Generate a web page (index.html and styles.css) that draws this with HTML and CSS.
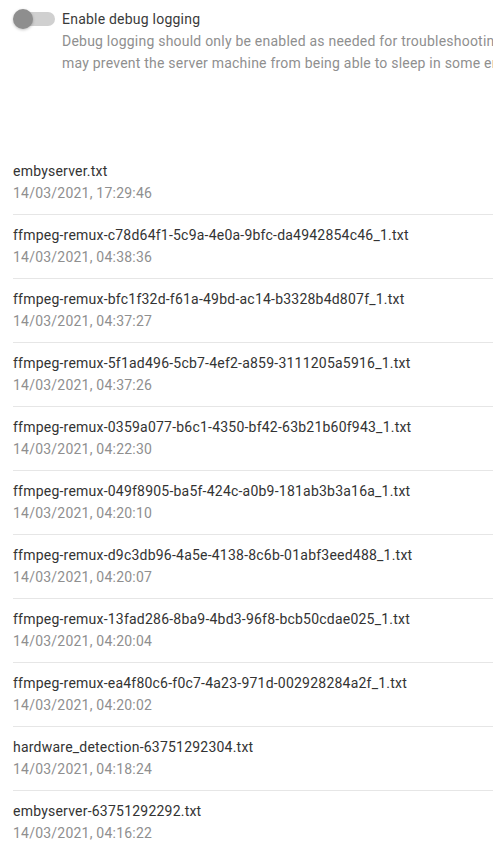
FILE: index.html
```html
<!DOCTYPE html>
<html lang="en">
<head>
    <meta charset="utf-8">
    <meta name="viewport" content="width=device-width, initial-scale=1">
    <title>Logs</title>
    <link rel="stylesheet" href="styles.css">
</head>
<body>
    <div class="page">
        <div class="debug-setting">
            <label class="toggle">
                <span class="toggle-track"></span>
                <span class="toggle-knob"></span>
            </label>
            <div class="debug-text">
                <div class="debug-title">Enable debug logging</div>
                <div class="debug-desc">
                    <span>Debug logging should only be enabled as needed for troubleshooting purposes. The increased file system access</span>
                    <span>may prevent the server machine from being able to sleep in some environments.</span>
                </div>
            </div>
        </div>

        <div class="log-list">
            <div class="log-item">
                <div class="log-name">embyserver.txt</div>
                <div class="log-date">14/03/2021, 17:29:46</div>
            </div>
            <div class="log-item">
                <div class="log-name">ffmpeg-remux-c78d64f1-5c9a-4e0a-9bfc-da4942854c46_1.txt</div>
                <div class="log-date">14/03/2021, 04:38:36</div>
            </div>
            <div class="log-item">
                <div class="log-name">ffmpeg-remux-bfc1f32d-f61a-49bd-ac14-b3328b4d807f_1.txt</div>
                <div class="log-date">14/03/2021, 04:37:27</div>
            </div>
            <div class="log-item">
                <div class="log-name">ffmpeg-remux-5f1ad496-5cb7-4ef2-a859-3111205a5916_1.txt</div>
                <div class="log-date">14/03/2021, 04:37:26</div>
            </div>
            <div class="log-item">
                <div class="log-name">ffmpeg-remux-0359a077-b6c1-4350-bf42-63b21b60f943_1.txt</div>
                <div class="log-date">14/03/2021, 04:22:30</div>
            </div>
            <div class="log-item">
                <div class="log-name">ffmpeg-remux-049f8905-ba5f-424c-a0b9-181ab3b3a16a_1.txt</div>
                <div class="log-date">14/03/2021, 04:20:10</div>
            </div>
            <div class="log-item">
                <div class="log-name">ffmpeg-remux-d9c3db96-4a5e-4138-8c6b-01abf3eed488_1.txt</div>
                <div class="log-date">14/03/2021, 04:20:07</div>
            </div>
            <div class="log-item">
                <div class="log-name">ffmpeg-remux-13fad286-8ba9-4bd3-96f8-bcb50cdae025_1.txt</div>
                <div class="log-date">14/03/2021, 04:20:04</div>
            </div>
            <div class="log-item">
                <div class="log-name">ffmpeg-remux-ea4f80c6-f0c7-4a23-971d-002928284a2f_1.txt</div>
                <div class="log-date">14/03/2021, 04:20:02</div>
            </div>
            <div class="log-item">
                <div class="log-name">hardware_detection-63751292304.txt</div>
                <div class="log-date">14/03/2021, 04:18:24</div>
            </div>
            <div class="log-item">
                <div class="log-name">embyserver-63751292292.txt</div>
                <div class="log-date">14/03/2021, 04:16:22</div>
            </div>
        </div>
    </div>
</body>
</html>
```

FILE: styles.css
```css
html, body {
    margin: 0;
    padding: 0;
    background: #fff;
    overflow: hidden;
}
body {
    font-family: Roboto, "Noto Sans", sans-serif;
    font-size: 14px;
    line-height: 22px;
    letter-spacing: 0.22px;
    color: #333;
}
.page {
    width: 640px;
    padding: 8px 0 0 13px;
}
.debug-setting {
    display: flex;
    align-items: flex-start;
}
.toggle {
    position: relative;
    width: 49px;
    height: 22px;
    flex: none;
}
.toggle-track {
    position: absolute;
    left: 2px;
    top: 4px;
    width: 40px;
    height: 14px;
    border-radius: 7px;
    background: #d0d0d0;
}
.toggle-knob {
    position: absolute;
    left: 0;
    top: 1px;
    width: 20px;
    height: 20px;
    border-radius: 50%;
    background: #8e8e8e;
    box-shadow: 0 1px 3px rgba(0,0,0,0.25);
}
.debug-text {
    white-space: nowrap;
}
.debug-title {
    color: #3a3a3a;
}
.debug-desc {
    color: #8f8f8f;
}
.debug-desc span {
    display: block;
}
.log-list {
    margin-top: 77px;
}
.log-item {
    padding: 9px 0 10px;
    border-bottom: 1px solid #e6e6e6;
    white-space: nowrap;
}
.log-item:last-child {
    border-bottom: none;
}
.log-name {
    color: #333;
}
.log-date {
    color: #8f8f8f;
}
```
